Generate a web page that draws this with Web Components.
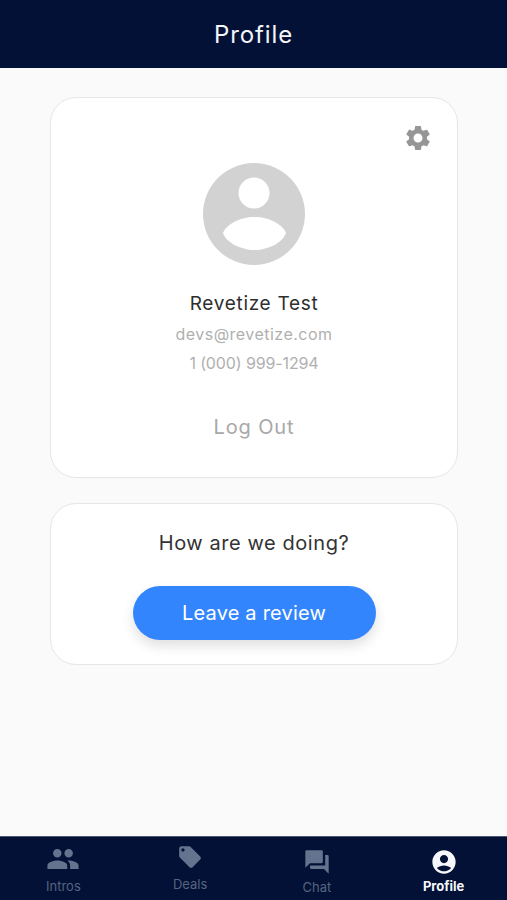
<!DOCTYPE html>
<html>
<head>
<meta charset="utf-8">
<title>Profile</title>
<style>
html, body { margin: 0; padding: 0; height: 100%; }
body { font-family: Inter, "Open Sans", sans-serif; background: #fafafa; }
</style>
</head>
<body>
<profile-app>
  <top-bar slot="top">Profile</top-bar>
  <info-card class="user">
    <user-summary name="Revetize Test" email="devs@revetize.com" phone="1 (000) 999-1294"></user-summary>
  </info-card>
  <info-card class="review">
    <review-prompt></review-prompt>
  </info-card>
  <bottom-nav slot="nav"></bottom-nav>
</profile-app>

<script>
class ProfileApp extends HTMLElement {
    constructor() {
        super();
        this.attachShadow({ mode: 'open' });
        this.shadowRoot.innerHTML = `
        <style>
        :host { display: flex; flex-direction: column; width: 507px; height: 900px; overflow: hidden; background: #fafafa; }
        main { flex: 1; display: flex; flex-direction: column; gap: 25px; padding: 29px 49px 0 50px; }
        </style>
        <slot name="top"></slot>
        <main><slot></slot></main>
        <slot name="nav"></slot>
        `;
    }
}

class TopBar extends HTMLElement {
    constructor() {
        super();
        this.attachShadow({ mode: 'open' });
        this.shadowRoot.innerHTML = `
        <style>
        :host {
            display: flex;
            align-items: center;
            justify-content: center;
            height: 68px;
            background: #021135;
            color: #f4f6fa;
            font-size: 24px;
            letter-spacing: 0.9px;
        }
        </style>
        <slot></slot>
        `;
    }
}

class InfoCard extends HTMLElement {
    constructor() {
        super();
        this.attachShadow({ mode: 'open' });
        this.shadowRoot.innerHTML = `
        <style>
        :host {
            display: block;
            position: relative;
            box-sizing: border-box;
            background: #fff;
            border: 1px solid #e6e6e8;
            border-radius: 26px;
        }
        </style>
        <slot></slot>
        `;
    }
}

class UserSummary extends HTMLElement {
    constructor() {
        super();
        this.attachShadow({ mode: 'open' });
    }

    connectedCallback() {
        this.shadowRoot.innerHTML = `
        <style>
        :host {
            display: flex;
            flex-direction: column;
            align-items: center;
            height: 379px;
            box-sizing: border-box;
            padding-top: 65px;
            text-align: center;
        }
        .gear { position: absolute; top: 25px; right: 24px; width: 30px; height: 30px; fill: #969696; }
        .avatar { width: 102px; height: 102px; display: block; }
        .name { margin-top: 27px; font-size: 19px; line-height: 24px; color: #2e2e2e; letter-spacing: 0.7px; }
        .email { margin-top: 8px; font-size: 16px; line-height: 20px; color: #b0b0b0; letter-spacing: 0.47px; }
        .phone { margin-top: 9px; font-size: 16px; line-height: 20px; color: #b0b0b0; letter-spacing: -0.12px; }
        .logout { margin-top: 41px; font-size: 20px; line-height: 26px; color: #a8a8a8; letter-spacing: 0.85px; }
        </style>
        <svg class="gear" viewBox="0 0 24 24"><path d="M19.14 12.94c.04-.3.06-.61.06-.94 0-.32-.02-.64-.07-.94l2.03-1.58c.18-.14.23-.41.12-.61l-1.92-3.32c-.12-.22-.37-.29-.59-.22l-2.39.96c-.5-.38-1.03-.7-1.62-.94l-.36-2.54c-.04-.24-.24-.41-.48-.41h-3.84c-.24 0-.43.17-.47.41l-.36 2.54c-.59.24-1.13.57-1.62.94l-2.39-.96c-.22-.08-.47 0-.59.22L2.74 8.87c-.12.21-.08.47.12.61l2.03 1.58c-.05.3-.09.63-.09.94s.02.64.07.94l-2.03 1.58c-.18.14-.23.41-.12.61l1.92 3.32c.12.22.37.29.59.22l2.39-.96c.5.38 1.03.7 1.62.94l.36 2.54c.05.24.24.41.48.41h3.84c.24 0 .44-.17.47-.41l.36-2.54c.59-.24 1.13-.56 1.62-.94l2.39.96c.22.08.47 0 .59-.22l1.92-3.32c.12-.22.07-.47-.12-.61l-2.01-1.58zM12 15.6c-1.98 0-3.6-1.62-3.6-3.6s1.62-3.6 3.6-3.6 3.6 1.62 3.6 3.6-1.62 3.6-3.6 3.6z"/></svg>
        <svg class="avatar" viewBox="0 0 102 102">
          <circle cx="51" cy="51" r="51" fill="#d2d2d2"/>
          <circle cx="51" cy="30" r="15.5" fill="#fff"/>
          <path fill="#fff" d="M20 70C23 62 36 54 51.5 54S80 62 83 70C80 79 66 87 51.5 87S23 79 20 70Z"/>
        </svg>
        <div class="name">${this.getAttribute('name')}</div>
        <div class="email">${this.getAttribute('email')}</div>
        <div class="phone">${this.getAttribute('phone')}</div>
        <div class="logout">Log Out</div>
        `;
    }
}

class ReviewPrompt extends HTMLElement {
    constructor() {
        super();
        this.attachShadow({ mode: 'open' });
        this.shadowRoot.innerHTML = `
        <style>
        :host {
            display: flex;
            flex-direction: column;
            align-items: center;
            height: 160px;
            box-sizing: border-box;
            padding-top: 26px;
        }
        .ask { font-size: 20px; line-height: 26px; color: #333; letter-spacing: 0.57px; }
        button {
            margin-top: 30px;
            width: 243px;
            height: 54px;
            border: 0;
            border-radius: 27px;
            background: #3385fd;
            color: #fff;
            font: inherit;
            font-size: 20px;
            letter-spacing: 0.2px;
            box-shadow: 0 6px 12px rgba(60, 60, 70, 0.16);
        }
        </style>
        <div class="ask">How are we doing?</div>
        <button>Leave a review</button>
        `;
    }
}

const NAV_ICONS = {
    people: 'M16 11c1.66 0 2.99-1.34 2.99-3S17.66 5 16 5c-1.66 0-3 1.34-3 3s1.34 3 3 3zm-8 0c1.66 0 2.99-1.34 2.99-3S9.66 5 8 5C6.34 5 5 6.34 5 8s1.34 3 3 3zm0 2c-2.33 0-7 1.17-7 3.5V19h14v-2.5c0-2.33-4.67-3.5-7-3.5zm8 0c-.29 0-.62.02-.97.05 1.16.84 1.97 1.97 1.97 3.45V19h6v-2.5c0-2.33-4.67-3.5-7-3.5z',
    tag: 'M21.41 11.58l-9-9C12.05 2.22 11.55 2 11 2H4c-1.1 0-2 .9-2 2v7c0 .55.22 1.05.59 1.42l9 9c.36.36.86.58 1.41.58.55 0 1.05-.22 1.41-.59l7-7c.37-.36.59-.86.59-1.41 0-.55-.23-1.06-.59-1.42zM5.5 7C4.67 7 4 6.33 4 5.5S4.67 4 5.5 4 7 4.67 7 5.5 6.33 7 5.5 7z',
    chat: 'M21 6h-2v9H6v2c0 .55.45 1 1 1h11l4 4V7c0-.55-.45-1-1-1zm-4 6V3c0-.55-.45-1-1-1H3c-.55 0-1 .45-1 1v14l4-4h10c.55 0 1-.45 1-1z',
    account: 'M12 2C6.48 2 2 6.48 2 12s4.48 10 10 10 10-4.48 10-10S17.52 2 12 2zm0 4c1.93 0 3.5 1.57 3.5 3.5S13.93 13 12 13s-3.5-1.57-3.5-3.5S10.07 6 12 6zm0 14c-2.03 0-4.43-.82-6.14-2.88C7.55 15.8 9.68 15 12 15s4.45.8 6.14 2.12C16.43 19.18 14.03 20 12 20z'
};

class NavItem extends HTMLElement {
    constructor() {
        super();
        this.attachShadow({ mode: 'open' });
    }

    connectedCallback() {
        const size = this.getAttribute('size');
        this.shadowRoot.innerHTML = `
        <style>
        :host {
            display: flex;
            flex-direction: column;
            align-items: center;
            color: #566482;
            font-size: 13px;
            line-height: 16px;
        }
        :host([active]) { color: #f6f7fa; font-weight: 700; }
        .slot { height: 34px; display: flex; align-items: center; justify-content: center; color: #66738f; }
        :host([active]) .slot { color: #f6f7fa; }
        svg { fill: currentColor; display: block; }
        span { display: block; }
        </style>
        <div class="slot" style="margin-top:${this.getAttribute('top')}px">
          <svg width="${size}" height="${size}" viewBox="0 0 24 24"><path d="${NAV_ICONS[this.getAttribute('icon')]}"/></svg>
        </div>
        <span style="margin-top:${this.getAttribute('gap')}px"><slot></slot></span>
        `;
    }
}

class BottomNav extends HTMLElement {
    constructor() {
        super();
        this.attachShadow({ mode: 'open' });
        this.shadowRoot.innerHTML = `
        <style>
        :host {
            display: grid;
            grid-template-columns: repeat(4, 1fr);
            height: 63px;
            background: #021135;
            border-top: 1px solid #4a5674;
            box-sizing: content-box;
        }
        </style>
        <nav-item icon="people" size="34" top="5" gap="2">Intros</nav-item>
        <nav-item icon="tag" size="26" top="3" gap="2">Deals</nav-item>
        <nav-item icon="chat" size="28" top="8" gap="0">Chat</nav-item>
        <nav-item icon="account" size="28" top="8" gap="-1" active>Profile</nav-item>
        `;
    }
}

customElements.define('profile-app', ProfileApp);
customElements.define('top-bar', TopBar);
customElements.define('info-card', InfoCard);
customElements.define('user-summary', UserSummary);
customElements.define('review-prompt', ReviewPrompt);
customElements.define('nav-item', NavItem);
customElements.define('bottom-nav', BottomNav);
</script>
</body>
</html>
